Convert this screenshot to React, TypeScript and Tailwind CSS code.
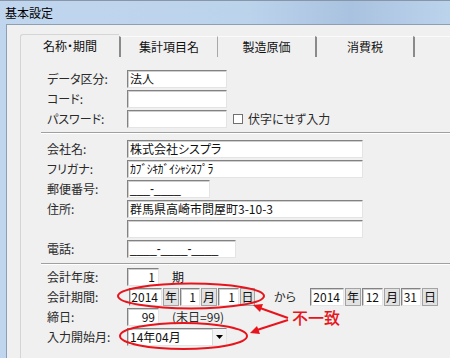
import React from "react";

const boxBase =
  "h-[18px] bg-white border border-t-[#828282] border-l-[#828282] border-r-[#e4e4e4] border-b-[#e4e4e4] shadow-[inset_1px_1px_0_#cfcfcf] flex items-center text-[12px] leading-none text-[#111] shrink-0 overflow-hidden whitespace-nowrap";

function Box({ className = "", right = false, children }: { className?: string; right?: boolean; children?: React.ReactNode }) {
  return <div className={`${boxBase} ${right ? "justify-end pr-[3px]" : "pl-[2px]"} ${className}`}>{children}</div>;
}

function Unit({ className = "", children }: { className?: string; children: React.ReactNode }) {
  return (
    <div className={`h-[18px] shrink-0 bg-[#e2e2e2] border border-[#a3a3a3] flex items-center justify-center text-[12px] leading-none text-[#111] ${className}`}>
      {children}
    </div>
  );
}

function Row({ label, children }: { label: string; children?: React.ReactNode }) {
  return (
    <div className="flex items-center h-[18px] pl-[6px]">
      <div className="w-[80px] shrink-0 text-[12px] leading-none text-[#2a2a2a]">{label}</div>
      {children}
    </div>
  );
}

function Sep({ className = "" }: { className?: string }) {
  return <div className={`h-[2px] border-t border-[#a0a0a0] border-b border-b-white ${className}`} />;
}

export default function App() {
  return (
    <div className="w-[450px] h-[358px] overflow-hidden relative font-['Noto_Sans_CJK_JP','Noto_Sans',sans-serif] [font-feature-settings:'palt'] bg-[linear-gradient(90deg,#c0d6ee_0%,#bcd3ec_55%,#a9c2df_78%,#bcd3ec_100%)]">
      {/* title bar */}
      <div className="h-[24px] border-t border-[#8796a8] flex items-center pl-[5px] text-[12px] leading-none text-black">基本設定</div>
      <div className="flex h-[334px]">
        <div className="w-[6px] shrink-0" />
        <div className="flex-1 bg-[#f0f0f0] border-l border-t border-[#8f9fb3] pl-[13px] pt-[9px] flex flex-col">
          {/* tabs */}
          <div className="flex items-end h-[23px] text-[12px] leading-none text-[#111]">
            <div className="w-[99px] h-[23px] border-l border-t border-[#d5d5d5] rounded-tl-[3px] flex items-center justify-center bg-[#f0f0f0]">名称・期間</div>
            <div className="w-[98px] h-[21px] border-l-2 border-[#8a8a8a] border-t border-t-[#fbfbfb] flex items-center justify-center">集計項目名</div>
            <div className="w-[98px] h-[21px] border-l border-[#a8a8a8] border-t border-t-[#fbfbfb] flex items-center justify-center">製造原価</div>
            <div className="w-[98px] h-[21px] border-l-2 border-[#8a8a8a] border-t border-t-[#fbfbfb] flex items-center justify-center">消費税</div>
            <div className="flex-1 h-[21px] border-l-2 border-[#8a8a8a] border-t border-t-[#fbfbfb]" />
          </div>
          {/* panel */}
          <div className="flex-1 border-l border-[#d5d5d5] pl-[20px] pt-[13px] flex flex-col">
            <div className="flex flex-col gap-[2px]">
              <Row label="データ区分:">
                <Box className="w-[100px]">法人</Box>
              </Row>
              <Row label="コード:">
                <Box className="w-[100px]" />
              </Row>
              <Row label="パスワード:">
                <Box className="w-[100px]" />
                <div className="ml-[6px] w-[10px] h-[10px] border border-[#707070] bg-white shrink-0" />
                <div className="ml-[5px] text-[12px] leading-none text-[#2a2a2a] whitespace-nowrap">伏字にせず入力</div>
              </Row>
            </div>
            <Sep className="mt-[4px]" />
            <div className="flex flex-col gap-[2px] mt-[6px]">
              <Row label="会社名:">
                <Box className="w-[236px]">株式会社シスプラ</Box>
              </Row>
              <Row label="フリガナ:">
                <Box className="w-[236px] text-[11px] tracking-[-0.6px]">ｶﾌﾞｼｷｶﾞｲｼｬｼｽﾌﾟﾗ</Box>
              </Row>
              <Row label="郵便番号:">
                <Box className="w-[83px] font-['Liberation_Sans',sans-serif] text-[8px]">___-____</Box>
              </Row>
              <Row label="住所:">
                <Box className="w-[236px]">群馬県高崎市問屋町3-10-3</Box>
              </Row>
              <Row label="">
                <Box className="w-[236px]" />
              </Row>
              <Row label="電話:">
                <Box className="w-[109px] font-['Liberation_Sans',sans-serif] text-[8px]">____-____-____</Box>
              </Row>
            </div>
            <Sep className="mt-[5px]" />
            <div className="flex flex-col gap-[2px] mt-[3px]">
              <Row label="会計年度:">
                <Box className="w-[32px]" right>1</Box>
                <div className="ml-[13px] text-[12px] leading-none text-[#111]">期</div>
              </Row>
              <Row label="会計期間:">
                <div className="flex items-center gap-[1px] ml-[2px]">
                  <Box className="w-[33px]" right>2014</Box>
                  <Unit className="w-[16px]">年</Unit>
                  <Box className="w-[20px]" right>1</Box>
                  <Unit className="w-[16px]">月</Unit>
                  <Box className="w-[21px]" right>1</Box>
                  <Unit className="w-[15px]">日</Unit>
                </div>
                <div className="ml-[19px] w-[36px] shrink-0 text-[12px] leading-none text-[#2a2a2a]">から</div>
                <div className="flex items-center gap-[1px]">
                  <Box className="w-[34px]" right>2014</Box>
                  <Unit className="w-[16px]">年</Unit>
                  <Box className="w-[21px]" right>12</Box>
                  <Unit className="w-[16px]">月</Unit>
                  <Box className="w-[20px]" right>31</Box>
                  <Unit className="w-[16px]">日</Unit>
                </div>
              </Row>
              <Row label="締日:">
                <Box className="w-[32px]" right>99</Box>
                <div className="ml-[13px] text-[12px] leading-none text-[#2a2a2a] whitespace-nowrap">(末日=99)</div>
              </Row>
              <Row label="入力開始月:">
                <div className={`${boxBase} w-[100px] pl-[2px] justify-between`}>
                  <span>14年04月</span>
                  <div className="w-[14px] h-full bg-[#f3f3f3] border-l border-[#dadada] flex items-center justify-center">
                    <svg width="7" height="4" viewBox="0 0 7 4">
                      <polygon points="0,0 7,0 3.5,4" fill="#000" />
                    </svg>
                  </div>
                </div>
              </Row>
            </div>
          </div>
        </div>
      </div>

      {/* annotations */}
      <svg className="absolute top-0 left-0 pointer-events-none" width="450" height="358" viewBox="0 0 450 358">
        <ellipse cx="191" cy="296" rx="73" ry="12.5" fill="none" stroke="#e8141c" strokeWidth="2" />
        <ellipse cx="183.5" cy="336" rx="63.5" ry="13" fill="none" stroke="#e8141c" strokeWidth="2" />
        <line x1="288" y1="318" x2="260" y2="308" stroke="#e8141c" strokeWidth="2" />
        <polygon points="253,305 263,304 260,312" fill="#e8141c" />
        <line x1="288" y1="320" x2="257" y2="330" stroke="#e8141c" strokeWidth="2" />
        <polygon points="250,333 257,326 260,334" fill="#e8141c" />
      </svg>
      <div className="absolute left-[292px] top-[309px] text-[16px] leading-none text-[#e8141c] font-medium">不一致</div>
    </div>
  );
}
